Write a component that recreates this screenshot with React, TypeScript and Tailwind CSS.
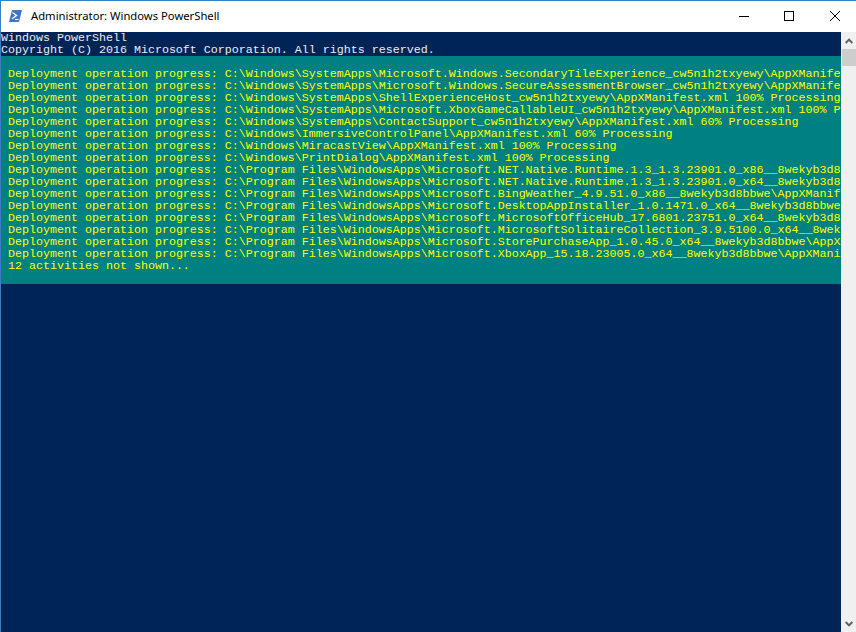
const header = ["Windows PowerShell", "Copyright (C) 2016 Microsoft Corporation. All rights reserved."];

const progressLines = [
  "C:\\Windows\\SystemApps\\Microsoft.Windows.SecondaryTileExperience_cw5n1h2txyewy\\AppXManifest.xml 60% Processing",
  "C:\\Windows\\SystemApps\\Microsoft.Windows.SecureAssessmentBrowser_cw5n1h2txyewy\\AppXManifest.xml 60% Processing",
  "C:\\Windows\\SystemApps\\ShellExperienceHost_cw5n1h2txyewy\\AppXManifest.xml 100% Processing",
  "C:\\Windows\\SystemApps\\Microsoft.XboxGameCallableUI_cw5n1h2txyewy\\AppXManifest.xml 100% Processing",
  "C:\\Windows\\SystemApps\\ContactSupport_cw5n1h2txyewy\\AppXManifest.xml 60% Processing",
  "C:\\Windows\\ImmersiveControlPanel\\AppXManifest.xml 60% Processing",
  "C:\\Windows\\MiracastView\\AppXManifest.xml 100% Processing",
  "C:\\Windows\\PrintDialog\\AppXManifest.xml 100% Processing",
  "C:\\Program Files\\WindowsApps\\Microsoft.NET.Native.Runtime.1.3_1.3.23901.0_x86__8wekyb3d8bbwe\\AppXManifest.xml",
  "C:\\Program Files\\WindowsApps\\Microsoft.NET.Native.Runtime.1.3_1.3.23901.0_x64__8wekyb3d8bbwe\\AppXManifest.xml",
  "C:\\Program Files\\WindowsApps\\Microsoft.BingWeather_4.9.51.0_x86__8wekyb3d8bbwe\\AppXManifest.xml",
  "C:\\Program Files\\WindowsApps\\Microsoft.DesktopAppInstaller_1.0.1471.0_x64__8wekyb3d8bbwe\\AppXManifest.xml",
  "C:\\Program Files\\WindowsApps\\Microsoft.MicrosoftOfficeHub_17.6801.23751.0_x64__8wekyb3d8bbwe\\AppXManifest.xml",
  "C:\\Program Files\\WindowsApps\\Microsoft.MicrosoftSolitaireCollection_3.9.5100.0_x64__8wekyb3d8bbwe\\AppXManifest.xml",
  "C:\\Program Files\\WindowsApps\\Microsoft.StorePurchaseApp_1.0.45.0_x64__8wekyb3d8bbwe\\AppXManifest.xml",
  "C:\\Program Files\\WindowsApps\\Microsoft.XboxApp_15.18.23005.0_x64__8wekyb3d8bbwe\\AppXManifest.xml",
];

const mono = "font-['Liberation_Mono',monospace] text-[11.67px] leading-[12px] whitespace-pre";

function TitleBar() {
  return (
    <div className="flex h-[31px] shrink-0 items-center bg-white pb-[1px]">
      <svg className="ml-[8px] h-[12px] w-[13px]" viewBox="0 0 13 12">
        <polygon points="3,0 13,0 10,12 0,12" fill="#3f74cf" />
        <path d="M3.5 2.5 L7.5 5.5 L3 8.8" fill="none" stroke="#fff" strokeWidth="1.4" />
        <path d="M6 9.5 H9.5" stroke="#fff" strokeWidth="1.2" />
      </svg>
      <span className="ml-[9px] font-['Noto_Sans',sans-serif] text-[11.25px] text-black">Administrator: Windows PowerShell</span>
      <div className="ml-auto flex items-center">
        <svg className="mr-[35px] h-[10px] w-[10px]" viewBox="0 0 10 10">
          <path d="M0 5.5 H10" stroke="#000" strokeWidth="1" />
        </svg>
        <svg className="mr-[36px] h-[10px] w-[10px]" viewBox="0 0 10 10">
          <rect x="0.5" y="0.5" width="9" height="9" fill="none" stroke="#000" strokeWidth="1" />
        </svg>
        <svg className="mr-[16px] h-[10px] w-[10px]" viewBox="0 0 10 10">
          <path d="M0 0 L10 10 M10 0 L0 10" stroke="#000" strokeWidth="1" />
        </svg>
      </div>
    </div>
  );
}

function Scrollbar() {
  return (
    <div className="flex w-[15px] shrink-0 flex-col bg-[#f0f0f0]">
      <div className="flex h-[17px] items-center justify-center pl-[1px]">
        <svg className="h-[6px] w-[8px]" viewBox="0 0 8 6">
          <path d="M0.7 5 L4 1.6 L7.3 5" fill="none" stroke="#606060" strokeWidth="2" />
        </svg>
      </div>
      <div className="ml-[1px] h-[17px] bg-[#cdcdcd]" />
      <div className="flex-1" />
      <div className="flex h-[17px] items-center justify-center pl-[1px]">
        <svg className="h-[6px] w-[8px]" viewBox="0 0 8 6">
          <path d="M0.7 1 L4 4.4 L7.3 1" fill="none" stroke="#606060" strokeWidth="2" />
        </svg>
      </div>
    </div>
  );
}

export default function App() {
  return (
    <div className="flex h-[632px] w-[856px] flex-col overflow-hidden border-t border-l border-[#3a7fc4] bg-white">
      <TitleBar />
      <div className="flex min-h-0 flex-1">
        <div className={`min-w-0 flex-1 overflow-hidden bg-[#012456] ${mono}`}>
          {header.map((line) => (
            <div key={line} className="text-[#eeedf0]">{line}</div>
          ))}
          <div className="bg-[#008080] py-[12px] pl-[7px] text-[#ffff00]">
            {progressLines.map((line) => (
              <div key={line}>{`Deployment operation progress: ${line}`}</div>
            ))}
            <div>12 activities not shown...</div>
          </div>
        </div>
        <Scrollbar />
      </div>
    </div>
  );
}
